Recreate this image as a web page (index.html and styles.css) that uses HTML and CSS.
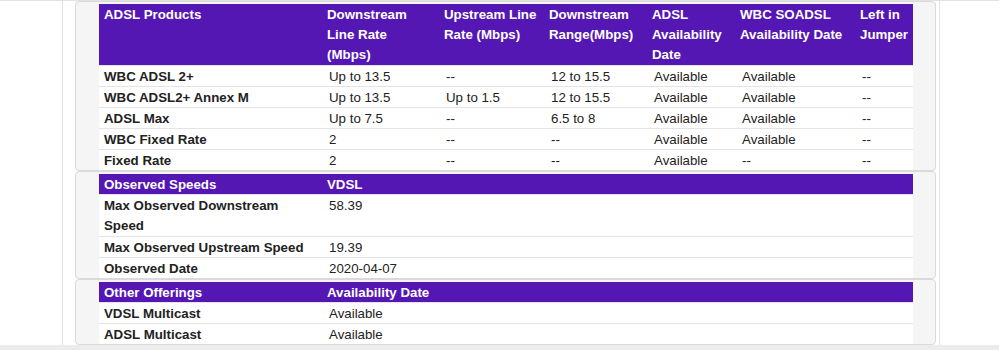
FILE: index.html
```html
<!DOCTYPE html>
<html>
<head>
<meta charset="utf-8">
<link rel="stylesheet" href="styles.css">
</head>
<body>
<div class="frame">
  <div class="page">
    <div class="box">
      <table class="grid">
        <colgroup>
          <col class="c1"><col class="c2"><col class="c3"><col class="c4"><col class="c5"><col class="c6"><col class="c7">
        </colgroup>
        <thead>
          <tr class="multi">
            <th>ADSL Products</th>
            <th>Downstream<br>Line Rate<br>(Mbps)</th>
            <th>Upstream Line<br>Rate (Mbps)</th>
            <th>Downstream<br>Range(Mbps)</th>
            <th>ADSL<br>Availability<br>Date</th>
            <th>WBC SOADSL<br>Availability Date</th>
            <th>Left in<br>Jumper</th>
          </tr>
        </thead>
        <tbody>
          <tr><th>WBC ADSL 2+</th><td>Up to 13.5</td><td>--</td><td>12 to 15.5</td><td>Available</td><td>Available</td><td>--</td></tr>
          <tr><th>WBC ADSL2+ Annex M</th><td>Up to 13.5</td><td>Up to 1.5</td><td>12 to 15.5</td><td>Available</td><td>Available</td><td>--</td></tr>
          <tr><th>ADSL Max</th><td>Up to 7.5</td><td>--</td><td>6.5 to 8</td><td>Available</td><td>Available</td><td>--</td></tr>
          <tr><th>WBC Fixed Rate</th><td>2</td><td>--</td><td>--</td><td>Available</td><td>Available</td><td>--</td></tr>
          <tr><th>Fixed Rate</th><td>2</td><td>--</td><td>--</td><td>Available</td><td>--</td><td>--</td></tr>
        </tbody>
      </table>
    </div>
    <div class="box">
      <table class="grid">
        <colgroup><col class="c1"><col></colgroup>
        <thead>
          <tr><th>Observed Speeds</th><th>VDSL</th></tr>
        </thead>
        <tbody>
          <tr class="multi"><th>Max Observed Downstream<br>Speed</th><td>58.39</td></tr>
          <tr><th>Max Observed Upstream Speed</th><td>19.39</td></tr>
          <tr><th>Observed Date</th><td>2020-04-07</td></tr>
        </tbody>
      </table>
    </div>
    <div class="box">
      <table class="grid">
        <colgroup><col class="c1"><col></colgroup>
        <thead>
          <tr><th>Other Offerings</th><th>Availability Date</th></tr>
        </thead>
        <tbody>
          <tr><th>VDSL Multicast</th><td>Available</td></tr>
          <tr><th>ADSL Multicast</th><td>Available</td></tr>
        </tbody>
      </table>
    </div>
  </div>
</div>
<div class="strip"></div>
</body>
</html>
```

FILE: styles.css
```css
html, body {
  margin: 0;
  padding: 0;
  background: #ffffff;
}

body {
  font-family: "Liberation Sans", Arial, sans-serif;
  font-size: 13.3px;
  line-height: 18px;
  color: #222222;
  border-top: 1px solid #e2e2e2;
  height: 349px;
  overflow: hidden;
  display: flex;
  flex-direction: column;
}

.frame {
  flex: 1;
  display: flex;
}

.page {
  margin-left: 62px;
  width: 878px;
  box-sizing: border-box;
  border-left: 1px solid #e3e3e3;
  border-right: 1px solid #e3e3e3;
  padding-left: 12px;
  padding-right: 3px;
  display: flex;
  flex-direction: column;
}

.box {
  background: #f5f5f5;
  border: 1px solid #dadada;
  border-radius: 4px;
  padding: 2px 21px 0 23px;
}

.grid {
  width: 814px;
  border-collapse: collapse;
  table-layout: fixed;
  background: #ffffff;
}

.c1 { width: 223px; }
.c2 { width: 117px; }
.c3 { width: 105px; }
.c4 { width: 103px; }
.c5 { width: 88px; }
.c6 { width: 120px; }
.c7 { width: 58px; }

.grid th,
.grid td {
  text-align: left;
  vertical-align: top;
  padding: 2px 2px 0 5px;
  line-height: 18px;
  white-space: nowrap;
}

.grid .multi th,
.grid .multi td {
  line-height: 20px;
  padding-top: 1px;
}

.grid thead th {
  background: #5517b3;
  color: #ffffff;
  font-weight: bold;
}

.grid tbody th {
  font-weight: bold;
  color: #222222;
}

.grid tbody td {
  padding-left: 7px;
  color: #222222;
}

.grid tbody tr {
  border-top: 1px solid #e4e4e4;
}

.grid tbody tr:first-child {
  border-top-color: #e8e0f4;
}

.strip {
  height: 5px;
  background: #ececec;
  flex: none;
}
```
